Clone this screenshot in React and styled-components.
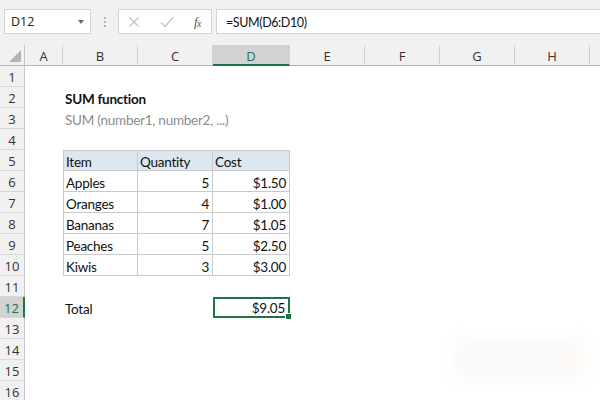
import React from "react";
import styled, { createGlobalStyle, css } from "styled-components";

const Global = createGlobalStyle`
  html, body { margin: 0; padding: 0; background: #ffffff; }
  body { width: 600px; height: 400px; overflow: hidden; }
`;

const GREEN = "#217346";
const CELL_FONT = `"Lato", "Open Sans", sans-serif`;
const UI_FONT = `"Open Sans", "Noto Sans", sans-serif`;

const Page = styled.div`
  position: relative;
  width: 600px;
  height: 400px;
  overflow: hidden;
  background: #f1f1f1;
  display: flex;
  flex-direction: column;
`;

const Toolbar = styled.div`
  height: 45px;
  flex: none;
  display: flex;
  align-items: flex-start;
  padding: 9px 0 0 4px;
  box-sizing: border-box;
`;

const NameBox = styled.div`
  width: 87px;
  height: 25px;
  box-sizing: border-box;
  background: #fff;
  border: 1px solid #d4d4d4;
  display: flex;
  align-items: center;
  justify-content: space-between;
  padding: 0 6px 0 6px;
  font-family: ${UI_FONT};
  font-size: 12.5px;
  color: #222;
`;

const Caret = styled.span`
  width: 0;
  height: 0;
  border-left: 3.5px solid transparent;
  border-right: 3.5px solid transparent;
  border-top: 4px solid #6a6a6a;
`;

const Grip = styled.div`
  width: 27px;
  height: 25px;
  display: flex;
  flex-direction: column;
  align-items: center;
  justify-content: center;
  gap: 2px;
  span {
    width: 2px;
    height: 2px;
    background: #b5b5b5;
  }
`;

const IconBox = styled.div`
  width: 94px;
  height: 25px;
  box-sizing: border-box;
  background: #fff;
  border: 1px solid #d4d4d4;
  display: flex;
  align-items: center;
  padding: 0 10px 0 9px;
  justify-content: space-between;
`;

const Fx = styled.span`
  font-family: "Liberation Serif", serif;
  font-style: italic;
  font-size: 13px;
  color: #555;
  letter-spacing: -0.5px;
  sub {
    font-size: 10px;
    vertical-align: -1px;
  }
`;

const FormulaInput = styled.div`
  flex: 1;
  height: 25px;
  margin-left: 4px;
  box-sizing: border-box;
  background: #fff;
  border: 1px solid #d4d4d4;
  border-right: none;
  display: flex;
  align-items: center;
  padding: 1px 0 0 9px;
  font-family: ${CELL_FONT};
  font-size: 12.5px;
  letter-spacing: -0.4px;
  color: #111;
`;

const Sheet = styled.div`
  flex: 1;
  overflow: hidden;
  display: grid;
  grid-template-columns: 25px 38px 75px 75px 77px 75px 75px 75px 75px 75px;
  grid-auto-rows: 21px;
  background: #fff;
`;

const Corner = styled.div`
  background: #f1f1f1;
  border-right: 1px solid #c8c8c8;
  border-bottom: 1px solid #b8b8b8;
  box-sizing: border-box;
  display: flex;
  align-items: flex-end;
  justify-content: flex-end;
  padding: 0 3px 3px 0;
  &::after {
    content: "";
    width: 0;
    height: 0;
    border-left: 12px solid transparent;
    border-bottom: 12px solid #b4b4b4;
  }
`;

const ColHead = styled.div`
  background: ${(p) => (p.$active ? "#d2d2d2" : "#f1f1f1")};
  color: ${(p) => (p.$active ? GREEN : "#333")};
  border-right: 1px solid #d0d0d0;
  border-bottom: ${(p) => (p.$active ? `2px solid ${GREEN}` : "1px solid #b8b8b8")};
  box-sizing: border-box;
  display: flex;
  align-items: center;
  justify-content: center;
  font-family: ${UI_FONT};
  font-size: 13px;
  padding-top: 2px;
`;

const RowHead = styled.div`
  background: ${(p) => (p.$active ? "#d2d2d2" : "#f1f1f1")};
  color: ${(p) => (p.$active ? GREEN : "#333")};
  border-right: ${(p) => (p.$active ? `2px solid ${GREEN}` : "1px solid #c8c8c8")};
  border-bottom: 1px solid #d8d8d8;
  box-sizing: border-box;
  display: flex;
  align-items: center;
  justify-content: center;
  padding-top: 2px;
  font-family: ${UI_FONT};
  font-size: 13px;
`;

const Cell = styled.div`
  position: relative;
  box-sizing: border-box;
  display: flex;
  align-items: center;
  justify-content: ${(p) => (p.$right ? "flex-end" : "flex-start")};
  padding: 3px 3px 0 2px;
  white-space: nowrap;
  font-family: ${CELL_FONT};
  font-size: 13.5px;
  letter-spacing: -0.25px;
  color: ${(p) => (p.$muted ? "#8c8c8c" : "#111")};
  font-weight: ${(p) => (p.$bold ? 700 : 400)};
  overflow: visible;
  ${(p) =>
    p.$table &&
    css`
      border-right: 1px solid #c9c9c9;
      border-bottom: 1px solid #c9c9c9;
    `}
  ${(p) =>
    p.$tableLeft &&
    css`
      border-left: 1px solid #c9c9c9;
    `}
  ${(p) =>
    p.$tableTop &&
    css`
      border-top: 1px solid #c9c9c9;
    `}
  ${(p) =>
    p.$header &&
    css`
      background: #dde7f1;
    `}
  ${(p) =>
    p.$selected &&
    css`
      border: 2px solid ${GREEN};
      padding: 1px 3px 0 2px;
    `}
`;

const Handle = styled.span`
  position: absolute;
  right: -4px;
  bottom: -4px;
  width: 5px;
  height: 5px;
  background: ${GREEN};
  border: 1px solid #fff;
`;

const Watermark = styled.div`
  position: absolute;
  left: 455px;
  top: 340px;
  width: 130px;
  height: 38px;
  background: #f2f2f2;
  filter: blur(8px);
  opacity: 0.5;
  &::after {
    content: "";
    position: absolute;
    right: 0;
    top: 6px;
    width: 22px;
    height: 24px;
    background: #fdf0e4;
  }
`;

// the ninth column is off-screen except for its left edge, so its label is not shown
const cols = ["A", "B", "C", "D", "E", "F", "G", "H", ""];

const items = [
  ["Apples", "5", "$1.50"],
  ["Oranges", "4", "$1.00"],
  ["Bananas", "7", "$1.05"],
  ["Peaches", "5", "$2.50"],
  ["Kiwis", "3", "$3.00"],
];

function rest(from) {
  return cols.slice(from).map((c, i) => <Cell key={"c" + (from + i)} />);
}

function rowContent(n) {
  if (n === 2)
    return [<Cell key="a" />, <Cell key="b" $bold>SUM function</Cell>, ...rest(2)];
  if (n === 3)
    return [<Cell key="a" />, <Cell key="b" $muted>SUM (number1, number2, ...)</Cell>, ...rest(2)];
  if (n === 5)
    return [
      <Cell key="a" />,
      <Cell key="b" $table $tableLeft $tableTop $header>Item</Cell>,
      <Cell key="c" $table $tableTop $header>Quantity</Cell>,
      <Cell key="d" $table $tableTop $header>Cost</Cell>,
      ...rest(4),
    ];
  if (n >= 6 && n <= 10) {
    const [item, qty, cost] = items[n - 6];
    return [
      <Cell key="a" />,
      <Cell key="b" $table $tableLeft>{item}</Cell>,
      <Cell key="c" $table $right>{qty}</Cell>,
      <Cell key="d" $table $right>{cost}</Cell>,
      ...rest(4),
    ];
  }
  if (n === 12)
    return [
      <Cell key="a" />,
      <Cell key="b">Total</Cell>,
      <Cell key="c" />,
      <Cell key="d" $right $selected>
        $9.05
        <Handle />
      </Cell>,
      ...rest(4),
    ];
  return rest(0);
}

export default function App() {
  const rows = Array.from({ length: 16 }, (_, i) => i + 1);
  return (
    <>
      <Global />
      <Page>
        <Toolbar>
          <NameBox>
            D12
            <Caret />
          </NameBox>
          <Grip>
            <span />
            <span />
            <span />
          </Grip>
          <IconBox>
            <svg width="12" height="12" viewBox="0 0 12 12">
              <path d="M1.5 1.5 L10.5 10.5 M10.5 1.5 L1.5 10.5" stroke="#c2c2c2" strokeWidth="1.2" fill="none" />
            </svg>
            <svg width="14" height="12" viewBox="0 0 14 12">
              <path d="M1 6.5 L5 10.5 L13 1.5" stroke="#c2c2c2" strokeWidth="1.3" fill="none" />
            </svg>
            <Fx>
              f<sub>x</sub>
            </Fx>
          </IconBox>
          <FormulaInput>=SUM(D6:D10)</FormulaInput>
        </Toolbar>
        <Sheet>
          <Corner />
          {cols.map((c, i) => (
            <ColHead key={"h" + i} $active={c === "D"}>
              {c}
            </ColHead>
          ))}
          {rows.map((n) => (
            <React.Fragment key={n}>
              <RowHead $active={n === 12}>{n}</RowHead>
              {rowContent(n)}
            </React.Fragment>
          ))}
        </Sheet>
        <Watermark />
      </Page>
    </>
  );
}
